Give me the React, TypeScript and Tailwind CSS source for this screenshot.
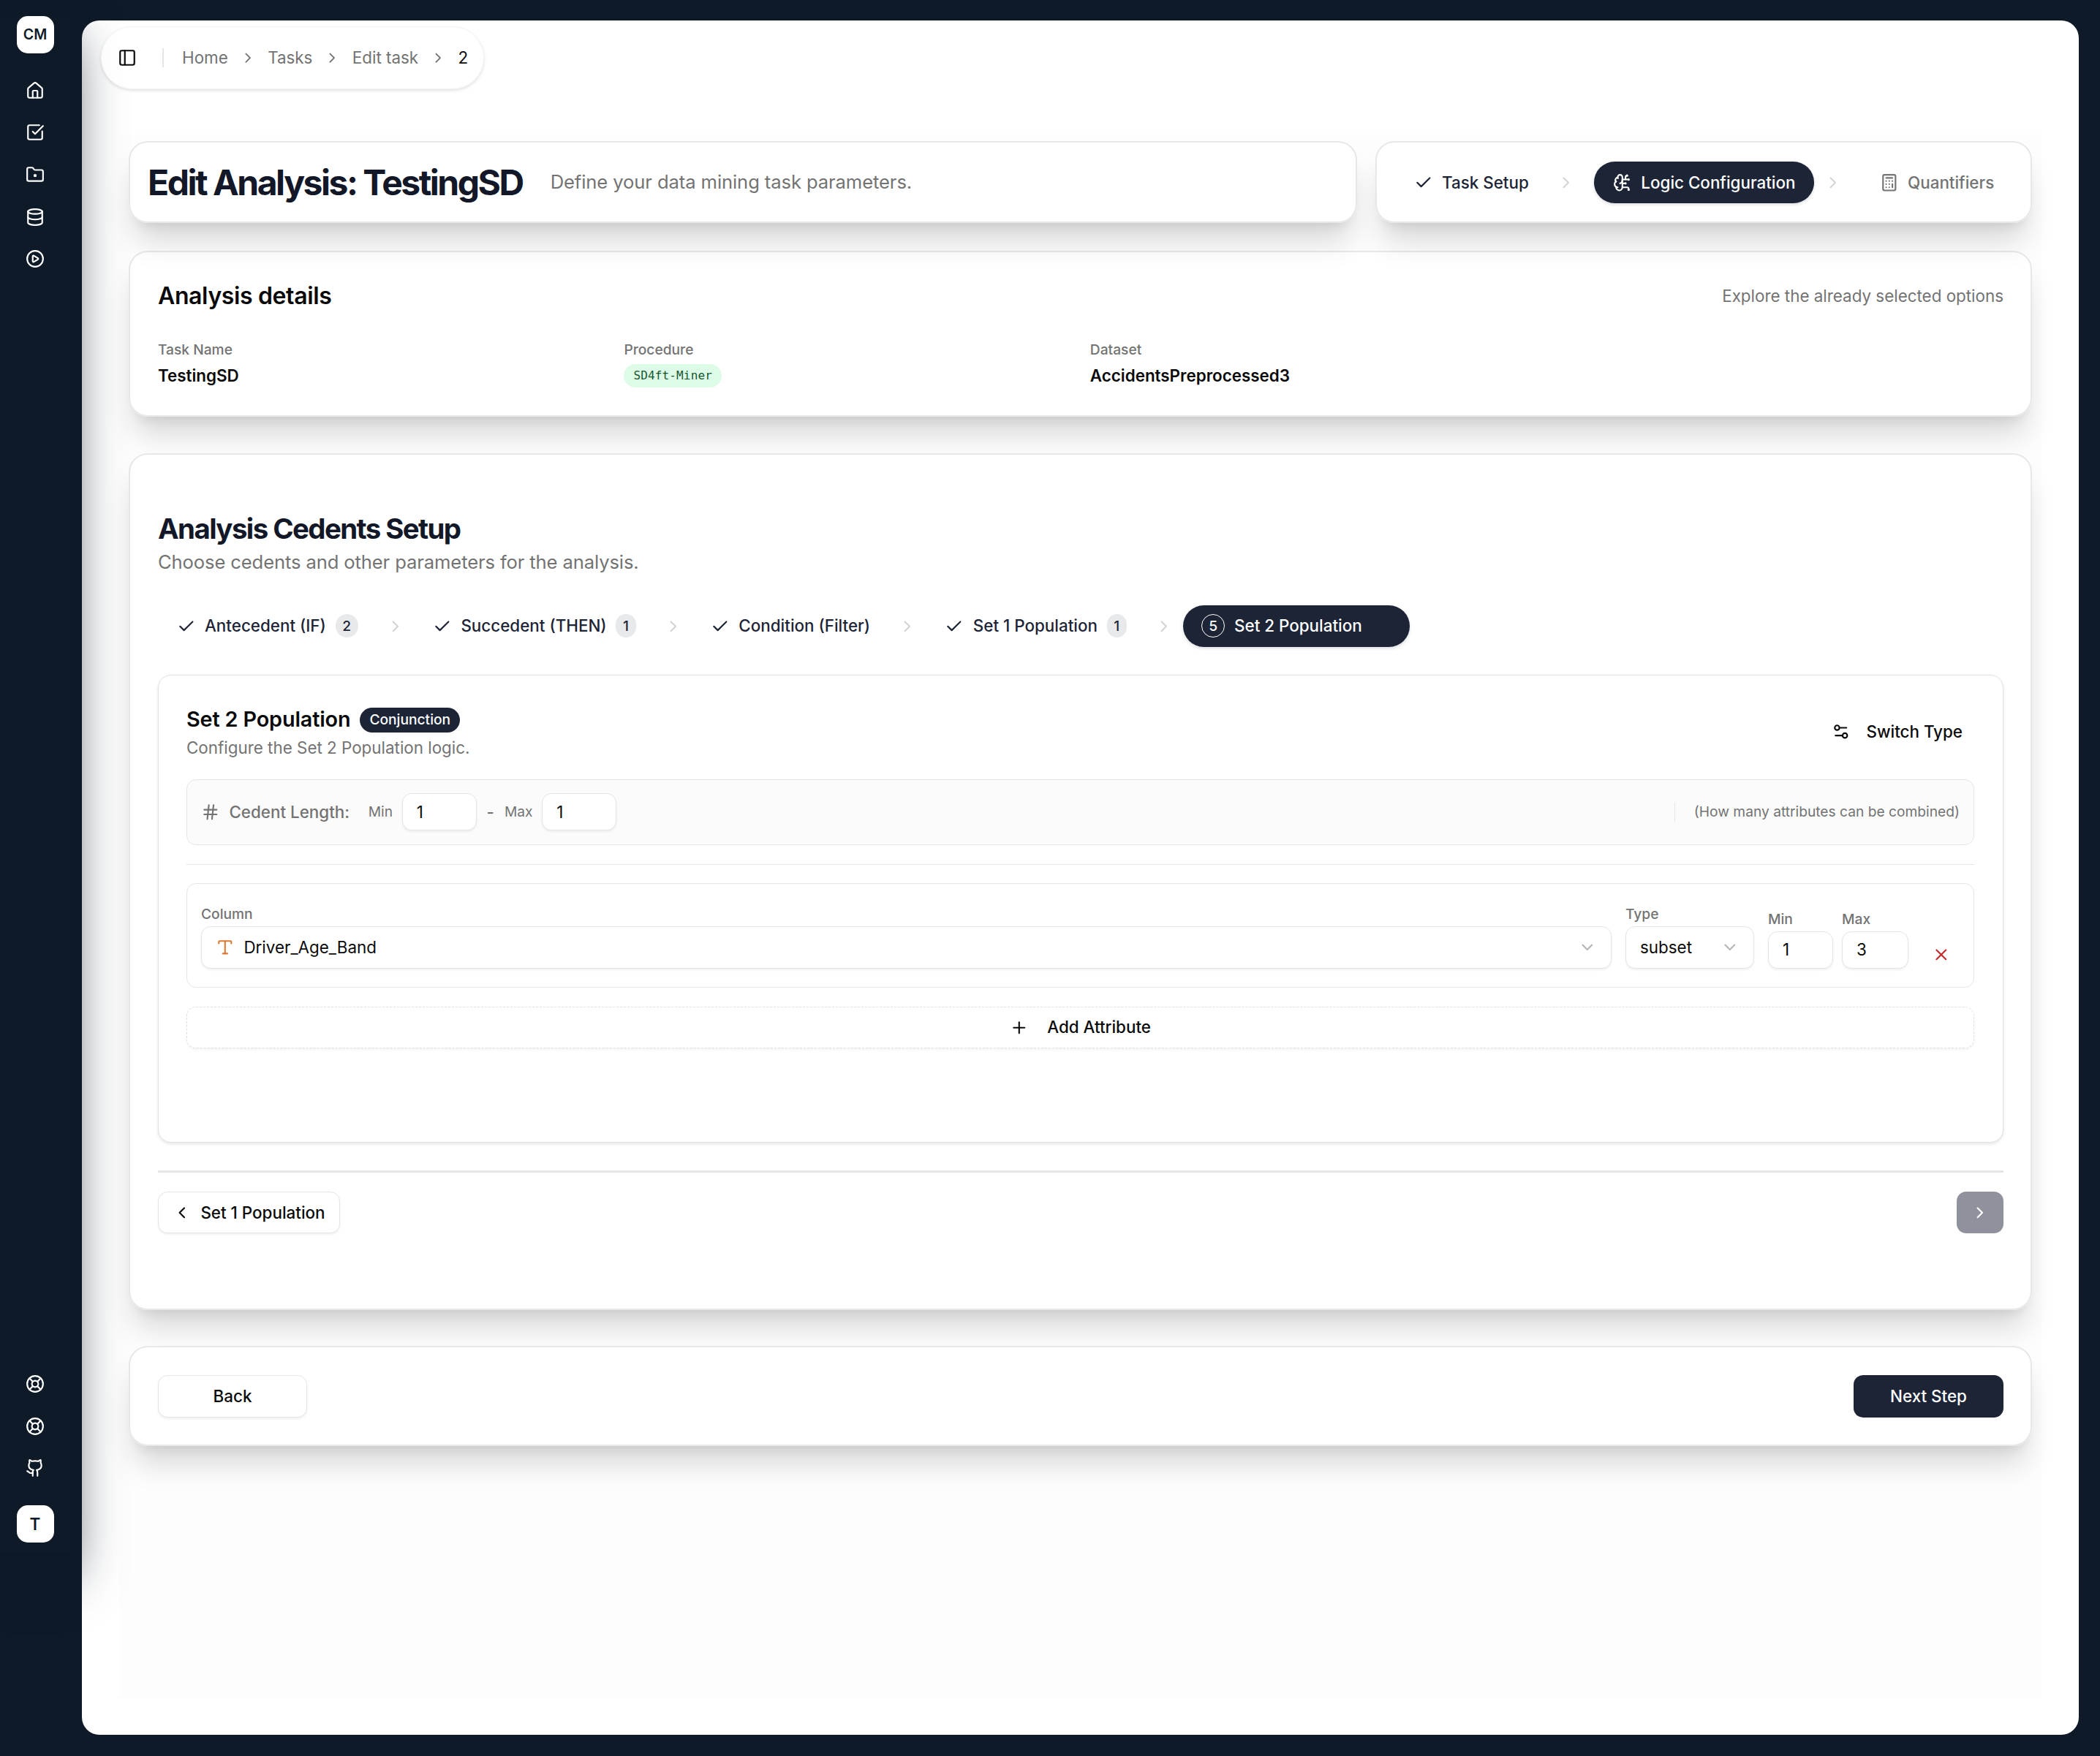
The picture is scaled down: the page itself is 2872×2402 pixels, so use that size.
import {
  BrainCircuit,
  Calculator,
  Check,
  ChevronDown,
  ChevronLeft,
  ChevronRight,
  CirclePlay,
  Database,
  FolderDot,
  Github,
  Hash,
  House,
  LifeBuoy,
  PanelLeft,
  Plus,
  Settings2,
  SquareCheckBig,
  Type,
  X,
} from 'lucide-react'
import type { LucideIcon } from 'lucide-react'

interface CedentStep {
  label: string
  count?: number
}

const mainNav: LucideIcon[] = [House, SquareCheckBig, FolderDot, Database, CirclePlay]
const footerNav: LucideIcon[] = [LifeBuoy, LifeBuoy, Github]
const breadcrumbs = ['Home', 'Tasks', 'Edit task']

const cedentSteps: CedentStep[] = [
  { label: 'Antecedent (IF)', count: 2 },
  { label: 'Succedent (THEN)', count: 1 },
  { label: 'Condition (Filter)' },
  { label: 'Set 1 Population', count: 1 },
]

const card =
  'rounded-[26px] border-2 border-[#e8e8e8] bg-white/90 bg-clip-padding shadow-[0_32px_40px_-8px_rgba(0,0,0,0.15),0_13px_16px_-10px_rgba(0,0,0,0.09)]'
const field = 'rounded-[13px] border border-[#e5e5e5] bg-white shadow-[0_2px_3px_rgba(0,0,0,0.06)]'

function NavIcon({ icon: Icon }: { icon: LucideIcon }) {
  return (
    <a className="flex h-[57.6px] w-[51px] items-center justify-center text-white">
      <Icon className="size-[26px]" />
    </a>
  )
}

function Sidebar() {
  return (
    <aside className="relative z-10 mt-[22px] flex h-[2102px] w-[96px] shrink-0 flex-col items-center shadow-[0_29px_70px_rgba(15,26,40,0.75)]">
      <div className="flex size-[51px] items-center justify-center rounded-[15px] bg-white text-[19.6px] font-semibold text-[#0f1a28]">
        CM
      </div>
      <nav className="mt-[22px] flex flex-col">
        {mainNav.map((icon, i) => (
          <NavIcon key={i} icon={icon} />
        ))}
      </nav>
      <nav className="mt-auto flex flex-col">
        {footerNav.map((icon, i) => (
          <NavIcon key={i} icon={icon} />
        ))}
      </nav>
      <div className="mt-[22px] mb-[14px] flex size-[51px] items-center justify-center rounded-[15px] bg-white text-[22.4px] font-semibold text-[#0f1a28]">
        T
      </div>
    </aside>
  )
}

function Breadcrumb() {
  return (
    <header className="relative z-20 ml-[26px] flex h-[86px] w-[524px] items-center rounded-full border border-[#f3f3f3] bg-white/80 pl-[22px] text-sm text-[#737373] shadow-[0_2px_4px_rgba(0,0,0,0.12)]">
      <PanelLeft className="size-[26px] text-[#0a0a0a]" />
      <div className="ml-[35px] h-[26px] w-[2px] bg-[#e5e5e5]" />
      <div className="ml-[25px] flex items-center gap-[16px]">
        {breadcrumbs.map((crumb) => (
          <div key={crumb} className="flex items-center gap-[16px]">
            <span>{crumb}</span>
            <ChevronRight className="size-[22.4px]" />
          </div>
        ))}
        <span className="text-[#0a0a0a]">2</span>
      </div>
    </header>
  )
}

function PageHeader() {
  return (
    <div className="flex gap-[25px]">
      <div className={`flex h-[112px] flex-1 items-center gap-[38px] px-[24px] pt-px ${card}`}>
        <h1 className="text-3xl font-bold tracking-[-2.48px] text-[#121828]">Edit Analysis: TestingSD</h1>
        <p className="text-base tracking-[-0.1px] text-[#737373]">Define your data mining task parameters.</p>
      </div>
      <div className={`flex h-[112px] w-[898px] items-center pt-px pl-[25px] text-sm font-medium ${card}`}>
        <div className="flex items-center gap-[12.8px] px-[25.6px] text-[#1c2436]">
          <Check className="size-[25.6px]" />
          Task Setup
        </div>
        <ChevronRight className="mr-[25.6px] ml-[12.8px] size-[25.6px] text-[#d4d4d4]" />
        <div className="flex h-[57.6px] items-center gap-[12.8px] rounded-full bg-[#1c2436] px-[25.6px] text-white shadow-[0_2px_4px_rgba(28,36,54,0.15)]">
          <BrainCircuit className="size-[25.6px]" />
          Logic Configuration
        </div>
        <ChevronRight className="mr-[25.6px] ml-[12.8px] size-[25.6px] text-[#d4d4d4]" />
        <div className="flex items-center gap-[12.8px] px-[25.6px] text-[#737373]">
          <Calculator className="size-[25.6px]" />
          Quantifiers
        </div>
      </div>
    </div>
  )
}

function AnalysisDetails() {
  return (
    <section className={`mt-[38px] h-[227px] pr-[37px] pl-[38px] ${card}`}>
      <div className="mt-[38px] flex items-center justify-between">
        <h2 className="text-xl font-semibold tracking-[-0.37px] text-[#0a0a0a]">Analysis details</h2>
        <p className="text-sm text-[#737373]">Explore the already selected options</p>
      </div>
      <div className="mt-[38px] grid grid-cols-4 gap-[25.6px]">
        <div>
          <div className="text-xs font-medium text-[#737373]">Task Name</div>
          <div className="mt-[7px] text-sm font-semibold text-[#0a0a0a]">TestingSD</div>
        </div>
        <div>
          <div className="text-xs font-medium text-[#737373]">Procedure</div>
          <div className="mt-[7px] flex h-[32px] w-fit items-center rounded-full bg-[#dcfce7] px-[13px] font-[DejaVu_Sans_Mono,monospace] text-[16px] tracking-[0.15px] text-[#16552f]">
            SD4ft-Miner
          </div>
        </div>
        <div>
          <div className="text-xs font-medium text-[#737373]">Dataset</div>
          <div className="mt-[7px] text-sm font-semibold text-[#0a0a0a]">AccidentsPreprocessed3</div>
        </div>
      </div>
    </section>
  )
}

function CedentStepper() {
  return (
    <div className="mt-[39px] flex h-[57.6px] items-center text-sm font-medium">
      {cedentSteps.map((step) => (
        <div key={step.label} className="flex items-center">
          <div className="flex items-center gap-[12.8px] px-[25.6px] text-[#1c2436]">
            <Check className="size-[25.6px]" />
            {step.label}
            {step.count && (
              <span className="flex h-[32px] items-center rounded-full bg-[#e8e9eb] px-[9.6px] text-xs">
                {step.count}
              </span>
            )}
          </div>
          <ChevronRight className="mx-[12.8px] size-[25.6px] text-[#d4d4d4]" />
        </div>
      ))}
      <div className="flex h-[57.6px] items-center gap-[12.8px] rounded-full bg-[#1c2436] pr-[65px] pl-[25.6px] text-white shadow-[0_2px_4px_rgba(28,36,54,0.15)]">
        <span className="flex size-[32px] items-center justify-center rounded-full border border-white text-xs">
          5
        </span>
        Set 2 Population
      </div>
    </div>
  )
}

function CedentLength() {
  return (
    <div className="mt-[27px] flex h-[90px] items-center rounded-[13px] border border-[#e5e5e5] bg-[#fbfbfb] px-[19px] text-xs text-[#737373]">
      <Hash className="size-[25.6px]" />
      <span className="ml-[12.8px] text-sm font-medium">Cedent Length:</span>
      <span className="ml-[25.6px]">Min</span>
      <div className={`ml-[12.8px] flex h-[51px] w-[102px] items-center px-[19px] text-sm text-[#0a0a0a] ${field}`}>
        1
      </div>
      <span className="ml-[13.8px] text-sm font-medium">-</span>
      <span className="ml-[14px]">Max</span>
      <div className={`ml-[12.8px] flex h-[51px] w-[102px] items-center px-[19px] text-sm text-[#0a0a0a] ${field}`}>
        1
      </div>
      <div className="ml-auto h-[25.6px] w-px bg-[#e5e5e5]" />
      <span className="ml-[25.6px]">(How many attributes can be combined)</span>
    </div>
  )
}

function AttributeRow() {
  return (
    <div className="mt-[25px] flex h-[143px] items-end gap-[19px] rounded-[13px] border border-[#e5e5e5] px-[19px] pb-[19px] text-sm text-[#0a0a0a]">
      <div className="mb-[6px] flex-1">
        <div className="mb-[3px] text-xs font-medium text-[#737373]">Column</div>
        <div className={`flex h-[58px] items-center px-[19px] ${field}`}>
          <Type className="size-[25.6px] text-[#dd7a33]" />
          <span className="ml-[12.8px]">Driver_Age_Band</span>
          <ChevronDown className="ml-auto size-[25.6px] text-[#b5b5b5]" />
        </div>
      </div>
      <div className="mb-[6px] w-[176px]">
        <div className="mb-[3px] text-xs font-medium text-[#737373]">Type</div>
        <div className={`flex h-[58px] items-center justify-between px-[19px] ${field}`}>
          subset
          <ChevronDown className="size-[25.6px] text-[#b5b5b5]" />
        </div>
      </div>
      <div className="mb-[6px] flex gap-[12px]">
        <div className="w-[89px]">
          <div className="mb-[3px] text-xs font-medium text-[#737373]">Min</div>
          <div className={`flex h-[51px] items-center px-[19px] ${field}`}>1</div>
        </div>
        <div className="w-[91px]">
          <div className="mb-[3px] text-xs font-medium text-[#737373]">Max</div>
          <div className={`flex h-[51px] items-center px-[19px] ${field}`}>3</div>
        </div>
      </div>
      <button className="flex size-[51px] items-center justify-center text-[#c42b2b]">
        <X className="size-[25.6px]" />
      </button>
    </div>
  )
}

function CedentEditor() {
  return (
    <div className="mt-[38px] h-[640px] rounded-[18px] border border-[#e2e2e2] bg-white pr-[39px] pl-[38px] shadow-[0_2px_4px_rgba(0,0,0,0.1)]">
      <div className="mt-[38px] flex items-center justify-between">
        <div>
          <div className="flex items-center gap-[13px]">
            <h3 className="text-lg font-semibold tracking-[-0.15px] text-[#0a0a0a]">Set 2 Population</h3>
            <span className="flex h-[34px] items-center rounded-full bg-[#1c2436] px-[13px] text-xs font-medium text-white">
              Conjunction
            </span>
          </div>
          <p className="text-sm text-[#737373]">Configure the Set 2 Population logic.</p>
        </div>
        <button className="flex items-center gap-[22px] pr-[16px] text-sm font-medium text-[#0a0a0a]">
          <Settings2 className="size-[25.6px]" />
          Switch Type
        </button>
      </div>
      <CedentLength />
      <div className="mt-[26px] h-px bg-[#e5e5e5]" />
      <AttributeRow />
      <button className="mt-[26px] flex h-[57px] w-full items-center justify-center gap-[25.6px] rounded-[13px] border border-dashed border-[#e0e0e0] text-sm font-medium text-[#0a0a0a] shadow-[0_2px_3px_rgba(0,0,0,0.05)]">
        <Plus className="size-[25.6px]" />
        Add Attribute
      </button>
    </div>
  )
}

function CedentSetup() {
  return (
    <section className={`mt-[50px] h-[1172px] pr-[37px] pl-[38px] ${card}`}>
      <h2 className="mt-[76px] text-2xl font-bold tracking-[-1.57px] text-[#121828]">Analysis Cedents Setup</h2>
      <p className="mt-px text-base tracking-[-0.12px] text-[#737373]">
        Choose cedents and other parameters for the analysis.
      </p>
      <CedentStepper />
      <CedentEditor />
      <div className="mt-[38px] h-[3px] bg-[#e5e5e5]" />
      <div className="mt-[26px] flex justify-between">
        <button className={`flex h-[57px] items-center gap-[12.8px] px-[19px] text-sm font-medium text-[#0a0a0a] ${field}`}>
          <ChevronLeft className="size-[25.6px]" />
          Set 1 Population
        </button>
        <button className="flex h-[57px] w-[64px] items-center justify-center rounded-[13px] bg-[#8f929c] text-white">
          <ChevronRight className="size-[25.6px]" />
        </button>
      </div>
    </section>
  )
}

export default function App() {
  return (
    <div className="flex h-[2402px] w-[2872px] bg-[#0f1a28] font-[Inter,sans-serif] [--text-xs:19.2px] [--text-sm:22.4px] [--text-base:25.6px] [--text-lg:28.8px] [--text-xl:32px] [--text-2xl:38.4px] [--text-3xl:48px]">
      <Sidebar />
      <main className="mt-[28px] ml-[16px] h-[2345px] w-[2731px] rounded-[24px] bg-white pt-[8px]">
        <Breadcrumb />
        <div className="mx-[51px] mt-[61px] h-[2140px] bg-[#fdfdfd] px-[13px] pt-[10px]">
          <PageHeader />
          <AnalysisDetails />
          <CedentSetup />
          <section className={`mt-[49px] flex h-[137px] items-center justify-between pr-[37px] pl-[38px] ${card}`}>
            <button className={`h-[58px] w-[204px] text-sm font-medium text-[#0a0a0a] ${field}`}>Back</button>
            <button className="h-[58px] w-[205px] rounded-[13px] bg-[#1c2436] text-sm font-medium text-white">
              Next Step
            </button>
          </section>
        </div>
      </main>
    </div>
  )
}
